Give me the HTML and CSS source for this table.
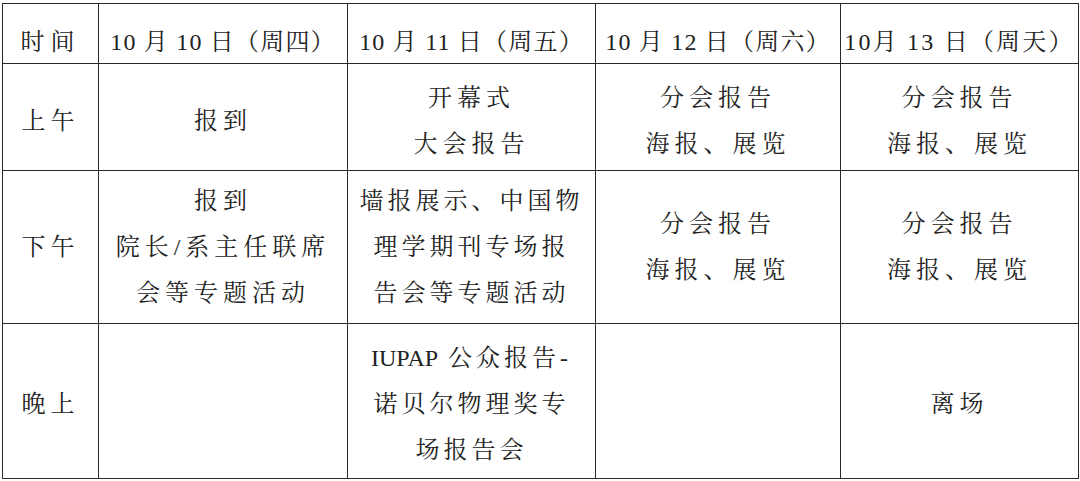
FILE: index.html
```html
<!DOCTYPE html>
<html lang="zh-CN">
<head>
<meta charset="utf-8">
<title>日程安排</title>
<link rel="stylesheet" href="styles.css">
</head>
<body>
<table class="schedule">
  <colgroup>
    <col class="c-time">
    <col class="c-d1">
    <col class="c-d2">
    <col class="c-d3">
    <col class="c-d4">
  </colgroup>
  <tr class="row-head">
    <td class="label">时间</td>
    <td>10 月 10 日（周四）</td>
    <td>10 月 11 日（周五）</td>
    <td>10 月 12 日（周六）</td>
    <td class="wide">10月 13 日（周天）</td>
  </tr>
  <tr class="row-am">
    <td>上午</td>
    <td>报到</td>
    <td>开幕式<br>大会报告</td>
    <td>分会报告<br>海报、展览</td>
    <td>分会报告<br>海报、展览</td>
  </tr>
  <tr class="row-pm">
    <td>下午</td>
    <td>报到<br>院长/系主任联席<br>会等专题活动</td>
    <td class="tight">墙报展示、中国物<br>理学期刊专场报<br>告会等专题活动</td>
    <td>分会报告<br>海报、展览</td>
    <td>分会报告<br>海报、展览</td>
  </tr>
  <tr class="row-eve">
    <td>晚上</td>
    <td></td>
    <td class="tight"><span class="latin">IUPAP</span> 公众报告-<br>诺贝尔物理奖专<br>场报告会</td>
    <td></td>
    <td>离场</td>
  </tr>
</table>
</body>
</html>
```
FILE: styles.css
```css
html, body {
  margin: 0;
  padding: 0;
  background: #ffffff;
}

body {
  padding: 3px 0 0 2px;
  font-family: "Liberation Serif", "Noto Serif CJK SC", "Noto Sans CJK SC", serif;
  color: #222222;
}

.schedule {
  border-collapse: collapse;
  table-layout: fixed;
  width: 1076px;
  border: 1px solid #6a6a6a;
}

.c-time { width: 96px; }
.c-d1 { width: 249px; }
.c-d2 { width: 248px; }
.c-d3 { width: 245px; }
.c-d4 { width: 238px; }

.schedule td {
  border: 1px solid #2a2a2a;
  text-align: center;
  vertical-align: middle;
  font-size: 24px;
  line-height: 46px;
  letter-spacing: 5px;
  padding: 0;
  white-space: nowrap;
  box-sizing: border-box;
}

.schedule td.tight {
  letter-spacing: 4px;
}

.latin {
  letter-spacing: 0;
}

.row-head td {
  height: 60px;
  line-height: 30px;
  padding-top: 16px;
  letter-spacing: 1.2px;
}

.row-head td.label {
  letter-spacing: 6px;
}

.row-head td.wide {
  letter-spacing: 2.2px;
}

.row-am td {
  height: 107px;
  padding-top: 8px;
}

.row-pm td {
  height: 153px;
}

.row-eve td {
  height: 155px;
  padding-top: 6px;
}
```
